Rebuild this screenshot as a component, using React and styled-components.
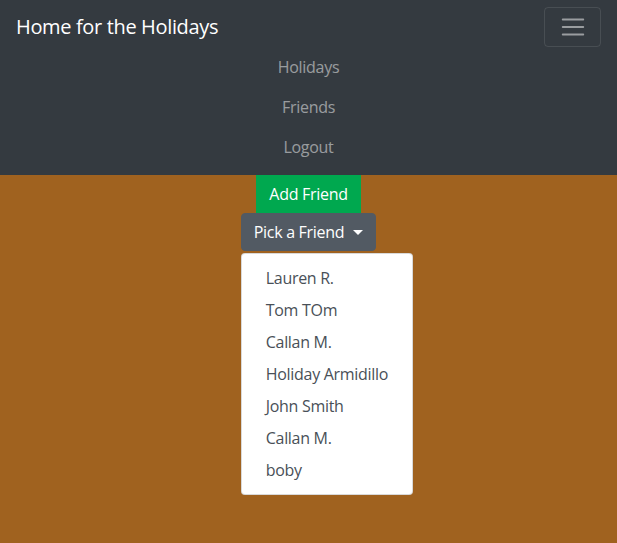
import React from 'react'
import styled, { createGlobalStyle } from 'styled-components'

const GlobalStyle = createGlobalStyle`
  html, body {
    margin: 0;
    padding: 0;
    background-color: #a0621f;
    font-family: "Open Sans", "Liberation Sans", sans-serif;
    font-size: 16px;
    line-height: 1.5;
    color: #212529;
  }
  * { box-sizing: border-box; }
`

const Page = styled.div`
  min-height: 543px;
  background-color: #a0621f;
`

const Navbar = styled.nav`
  display: flex;
  flex-wrap: wrap;
  align-items: center;
  justify-content: space-between;
  padding: 8px 16px;
  background-color: #343a40;
`

const Brand = styled.a`
  display: inline-block;
  padding: 4px 0 6px;
  font-size: 20px;
  line-height: 30px;
  color: #fff;
  white-space: nowrap;
  letter-spacing: -0.35px;
`

const Toggler = styled.button`
  display: flex;
  align-items: center;
  justify-content: center;
  width: 57px;
  height: 40px;
  margin-top: -3px;
  padding: 0;
  background: transparent;
  border: 1px solid rgba(255, 255, 255, 0.1);
  border-radius: 4px;
`

const Collapse = styled.div`
  flex-basis: 100%;
  display: flex;
  flex-direction: column;
  align-items: center;
  margin-top: -1px;
`

const NavLink = styled.a`
  display: block;
  padding: 8px 0;
  line-height: 24px;
  color: rgba(255, 255, 255, 0.5);
  letter-spacing: -0.3px;
`

const Main = styled.main`
  display: flex;
  flex-direction: column;
  align-items: center;
`

const Button = styled.button`
  display: inline-flex;
  align-items: center;
  font-family: inherit;
  font-size: 16px;
  line-height: 24px;
  padding: 6px 12px;
  border: 1px solid ${props => props.$bg};
  border-radius: ${props => props.$square ? '0' : '4px'};
  background-color: ${props => props.$bg};
  color: #fff;
  letter-spacing: -0.3px;
`

const Dropdown = styled.div`
  position: relative;
  display: inline-block;
`

const Caret = styled.span`
  display: inline-block;
  margin-left: 9px;
  border-top: 5px solid #fff;
  border-left: 5px solid transparent;
  border-right: 5px solid transparent;
`

const Menu = styled.div`
  position: absolute;
  z-index: 1000;
  top: 100%;
  left: 0;
  margin-top: 2px;
  padding: 8px 0;
  background: #fff;
  border: 1px solid rgba(0, 0, 0, 0.15);
  border-radius: 4px;
  white-space: nowrap;
  min-width: 172px;
`

const Item = styled.div`
  padding: 4px 24px;
  line-height: 24px;
  color: #495057;
  letter-spacing: -0.3px;
`

const friends = ['Lauren R.', 'Tom TOm', 'Callan M.', 'Holiday Armidillo', 'John Smith', 'Callan M.', 'boby']

const MenuIcon = () => (
  <svg width="28" height="28" viewBox="0 0 30 30">
    <path d="M4 7h22M4 15h22M4 23h22" stroke="rgba(255,255,255,0.5)" strokeWidth="2" strokeLinecap="round" />
  </svg>
)

export default function App() {
  return (
    <Page>
      <GlobalStyle />
      <Navbar>
        <Brand>Home for the Holidays</Brand>
        <Toggler><MenuIcon /></Toggler>
        <Collapse>
          <NavLink>Holidays</NavLink>
          <NavLink>Friends</NavLink>
          <NavLink>Logout</NavLink>
        </Collapse>
      </Navbar>
      <Main>
        <Button $bg="#00a84f" $square>Add Friend</Button>
        <Dropdown>
          <Button $bg="#525a63">Pick a Friend<Caret /></Button>
          <Menu>
            {friends.map((f, i) => <Item key={i}>{f}</Item>)}
          </Menu>
        </Dropdown>
      </Main>
    </Page>
  )
}
